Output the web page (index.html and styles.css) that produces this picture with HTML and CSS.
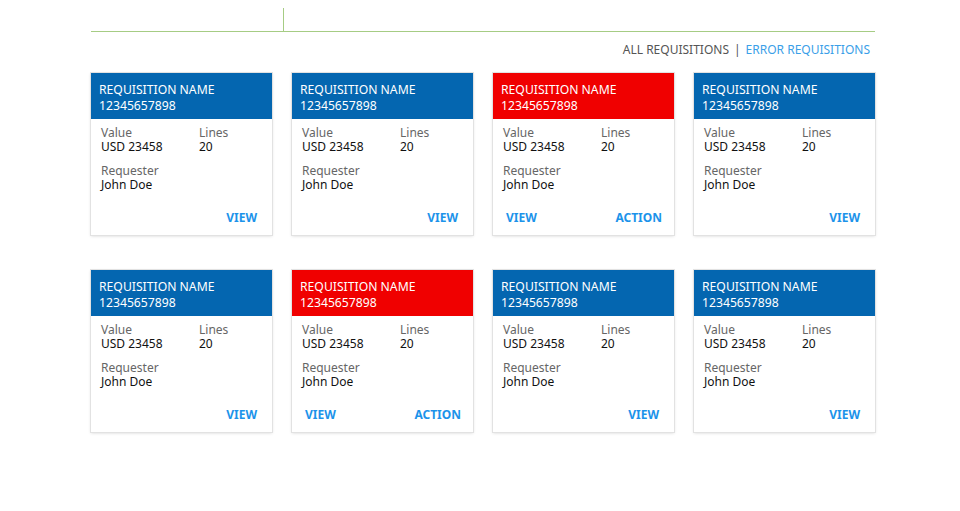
FILE: index.html
```html
<!DOCTYPE html>
<html>
<head>
<meta charset="utf-8">
<link rel="stylesheet" href="styles.css">
</head>
<body>
<div class="page">
  <div class="topbar">
    <div class="tab tab-first"></div>
    <div class="tab tab-rest"></div>
  </div>
  <div class="filters">
    <span class="filter-all">ALL REQUISITIONS</span>
    <span class="sep">|</span>
    <span class="filter-err">ERROR REQUISITIONS</span>
  </div>
  <div class="grid">
    <div class="card">
      <div class="card-head"><div>REQUISITION NAME</div><div>12345657898</div></div>
      <div class="card-body">
        <div class="fields">
          <div class="field"><div class="label">Value</div><div class="value">USD 23458</div></div>
          <div class="field"><div class="label">Lines</div><div class="value">20</div></div>
          <div class="field"><div class="label">Requester</div><div class="value">John Doe</div></div>
        </div>
        <div class="actions"><span class="link">VIEW</span></div>
      </div>
    </div>
    <div class="card">
      <div class="card-head"><div>REQUISITION NAME</div><div>12345657898</div></div>
      <div class="card-body">
        <div class="fields">
          <div class="field"><div class="label">Value</div><div class="value">USD 23458</div></div>
          <div class="field"><div class="label">Lines</div><div class="value">20</div></div>
          <div class="field"><div class="label">Requester</div><div class="value">John Doe</div></div>
        </div>
        <div class="actions"><span class="link">VIEW</span></div>
      </div>
    </div>
    <div class="card">
      <div class="card-head error"><div>REQUISITION NAME</div><div>12345657898</div></div>
      <div class="card-body">
        <div class="fields">
          <div class="field"><div class="label">Value</div><div class="value">USD 23458</div></div>
          <div class="field"><div class="label">Lines</div><div class="value">20</div></div>
          <div class="field"><div class="label">Requester</div><div class="value">John Doe</div></div>
        </div>
        <div class="actions split"><span class="link">VIEW</span><span class="link">ACTION</span></div>
      </div>
    </div>
    <div class="card">
      <div class="card-head"><div>REQUISITION NAME</div><div>12345657898</div></div>
      <div class="card-body">
        <div class="fields">
          <div class="field"><div class="label">Value</div><div class="value">USD 23458</div></div>
          <div class="field"><div class="label">Lines</div><div class="value">20</div></div>
          <div class="field"><div class="label">Requester</div><div class="value">John Doe</div></div>
        </div>
        <div class="actions"><span class="link">VIEW</span></div>
      </div>
    </div>
    <div class="card">
      <div class="card-head"><div>REQUISITION NAME</div><div>12345657898</div></div>
      <div class="card-body">
        <div class="fields">
          <div class="field"><div class="label">Value</div><div class="value">USD 23458</div></div>
          <div class="field"><div class="label">Lines</div><div class="value">20</div></div>
          <div class="field"><div class="label">Requester</div><div class="value">John Doe</div></div>
        </div>
        <div class="actions"><span class="link">VIEW</span></div>
      </div>
    </div>
    <div class="card">
      <div class="card-head error"><div>REQUISITION NAME</div><div>12345657898</div></div>
      <div class="card-body">
        <div class="fields">
          <div class="field"><div class="label">Value</div><div class="value">USD 23458</div></div>
          <div class="field"><div class="label">Lines</div><div class="value">20</div></div>
          <div class="field"><div class="label">Requester</div><div class="value">John Doe</div></div>
        </div>
        <div class="actions split"><span class="link">VIEW</span><span class="link">ACTION</span></div>
      </div>
    </div>
    <div class="card">
      <div class="card-head"><div>REQUISITION NAME</div><div>12345657898</div></div>
      <div class="card-body">
        <div class="fields">
          <div class="field"><div class="label">Value</div><div class="value">USD 23458</div></div>
          <div class="field"><div class="label">Lines</div><div class="value">20</div></div>
          <div class="field"><div class="label">Requester</div><div class="value">John Doe</div></div>
        </div>
        <div class="actions"><span class="link">VIEW</span></div>
      </div>
    </div>
    <div class="card">
      <div class="card-head"><div>REQUISITION NAME</div><div>12345657898</div></div>
      <div class="card-body">
        <div class="fields">
          <div class="field"><div class="label">Value</div><div class="value">USD 23458</div></div>
          <div class="field"><div class="label">Lines</div><div class="value">20</div></div>
          <div class="field"><div class="label">Requester</div><div class="value">John Doe</div></div>
        </div>
        <div class="actions"><span class="link">VIEW</span></div>
      </div>
    </div>
  </div>
</div>
</body>
</html>
```
FILE: styles.css
```css
html, body {
  margin: 0;
  padding: 0;
  background: #ffffff;
}
body {
  font-family: "Noto Sans", "Open Sans", sans-serif;
  font-size: 12px;
  color: #222;
}
.page {
  width: 784px;
  margin: 0 0 0 91px;
  padding: 8px 0 60px 0;
}
.topbar {
  display: flex;
  height: 23px;
  border-bottom: 1px solid #a6cc84;
}
.tab-first {
  width: 192px;
  border-right: 1px solid #a6cc84;
}
.filters {
  display: flex;
  justify-content: flex-end;
  gap: 5px;
  padding: 9px 5px 0 0;
  line-height: 17px;
  font-size: 12px;
}
.filter-all, .sep { color: #555; }
.filter-err { color: #3aa0e8; }
.grid {
  display: grid;
  grid-template-columns: repeat(4, 181px);
  column-gap: 20px;
  row-gap: 35px;
  margin-top: 15px;
}
.card {
  height: 162px;
  display: flex;
  flex-direction: column;
  background: #fff;
  box-shadow: 0 0 0 1px #e2e2e2, 0 1px 3px rgba(0,0,0,0.18);
}
.card-head {
  height: 46px;
  box-sizing: border-box;
  padding: 9px 8px 0 8px;
  background: #0466b0;
  color: #fff;
  line-height: 16px;
  font-size: 12.2px;
}
.card-head.error { background: #f00000; }
.card-body {
  flex: 1;
  display: flex;
  flex-direction: column;
  padding: 7px 10px 10px 10px;
}
.fields {
  display: grid;
  grid-template-columns: 98px 1fr;
  row-gap: 10px;
}
.label {
  color: #666;
  line-height: 14px;
}
.value {
  color: #111;
  line-height: 14px;
}
.actions {
  margin-top: auto;
  display: flex;
  justify-content: flex-end;
  padding: 0 5px 0 3px;
}
.actions.split { justify-content: space-between; padding-right: 2px; }
.link {
  color: #1c93ea;
  font-weight: 700;
  font-size: 12px;
  line-height: 14px;
}
```
